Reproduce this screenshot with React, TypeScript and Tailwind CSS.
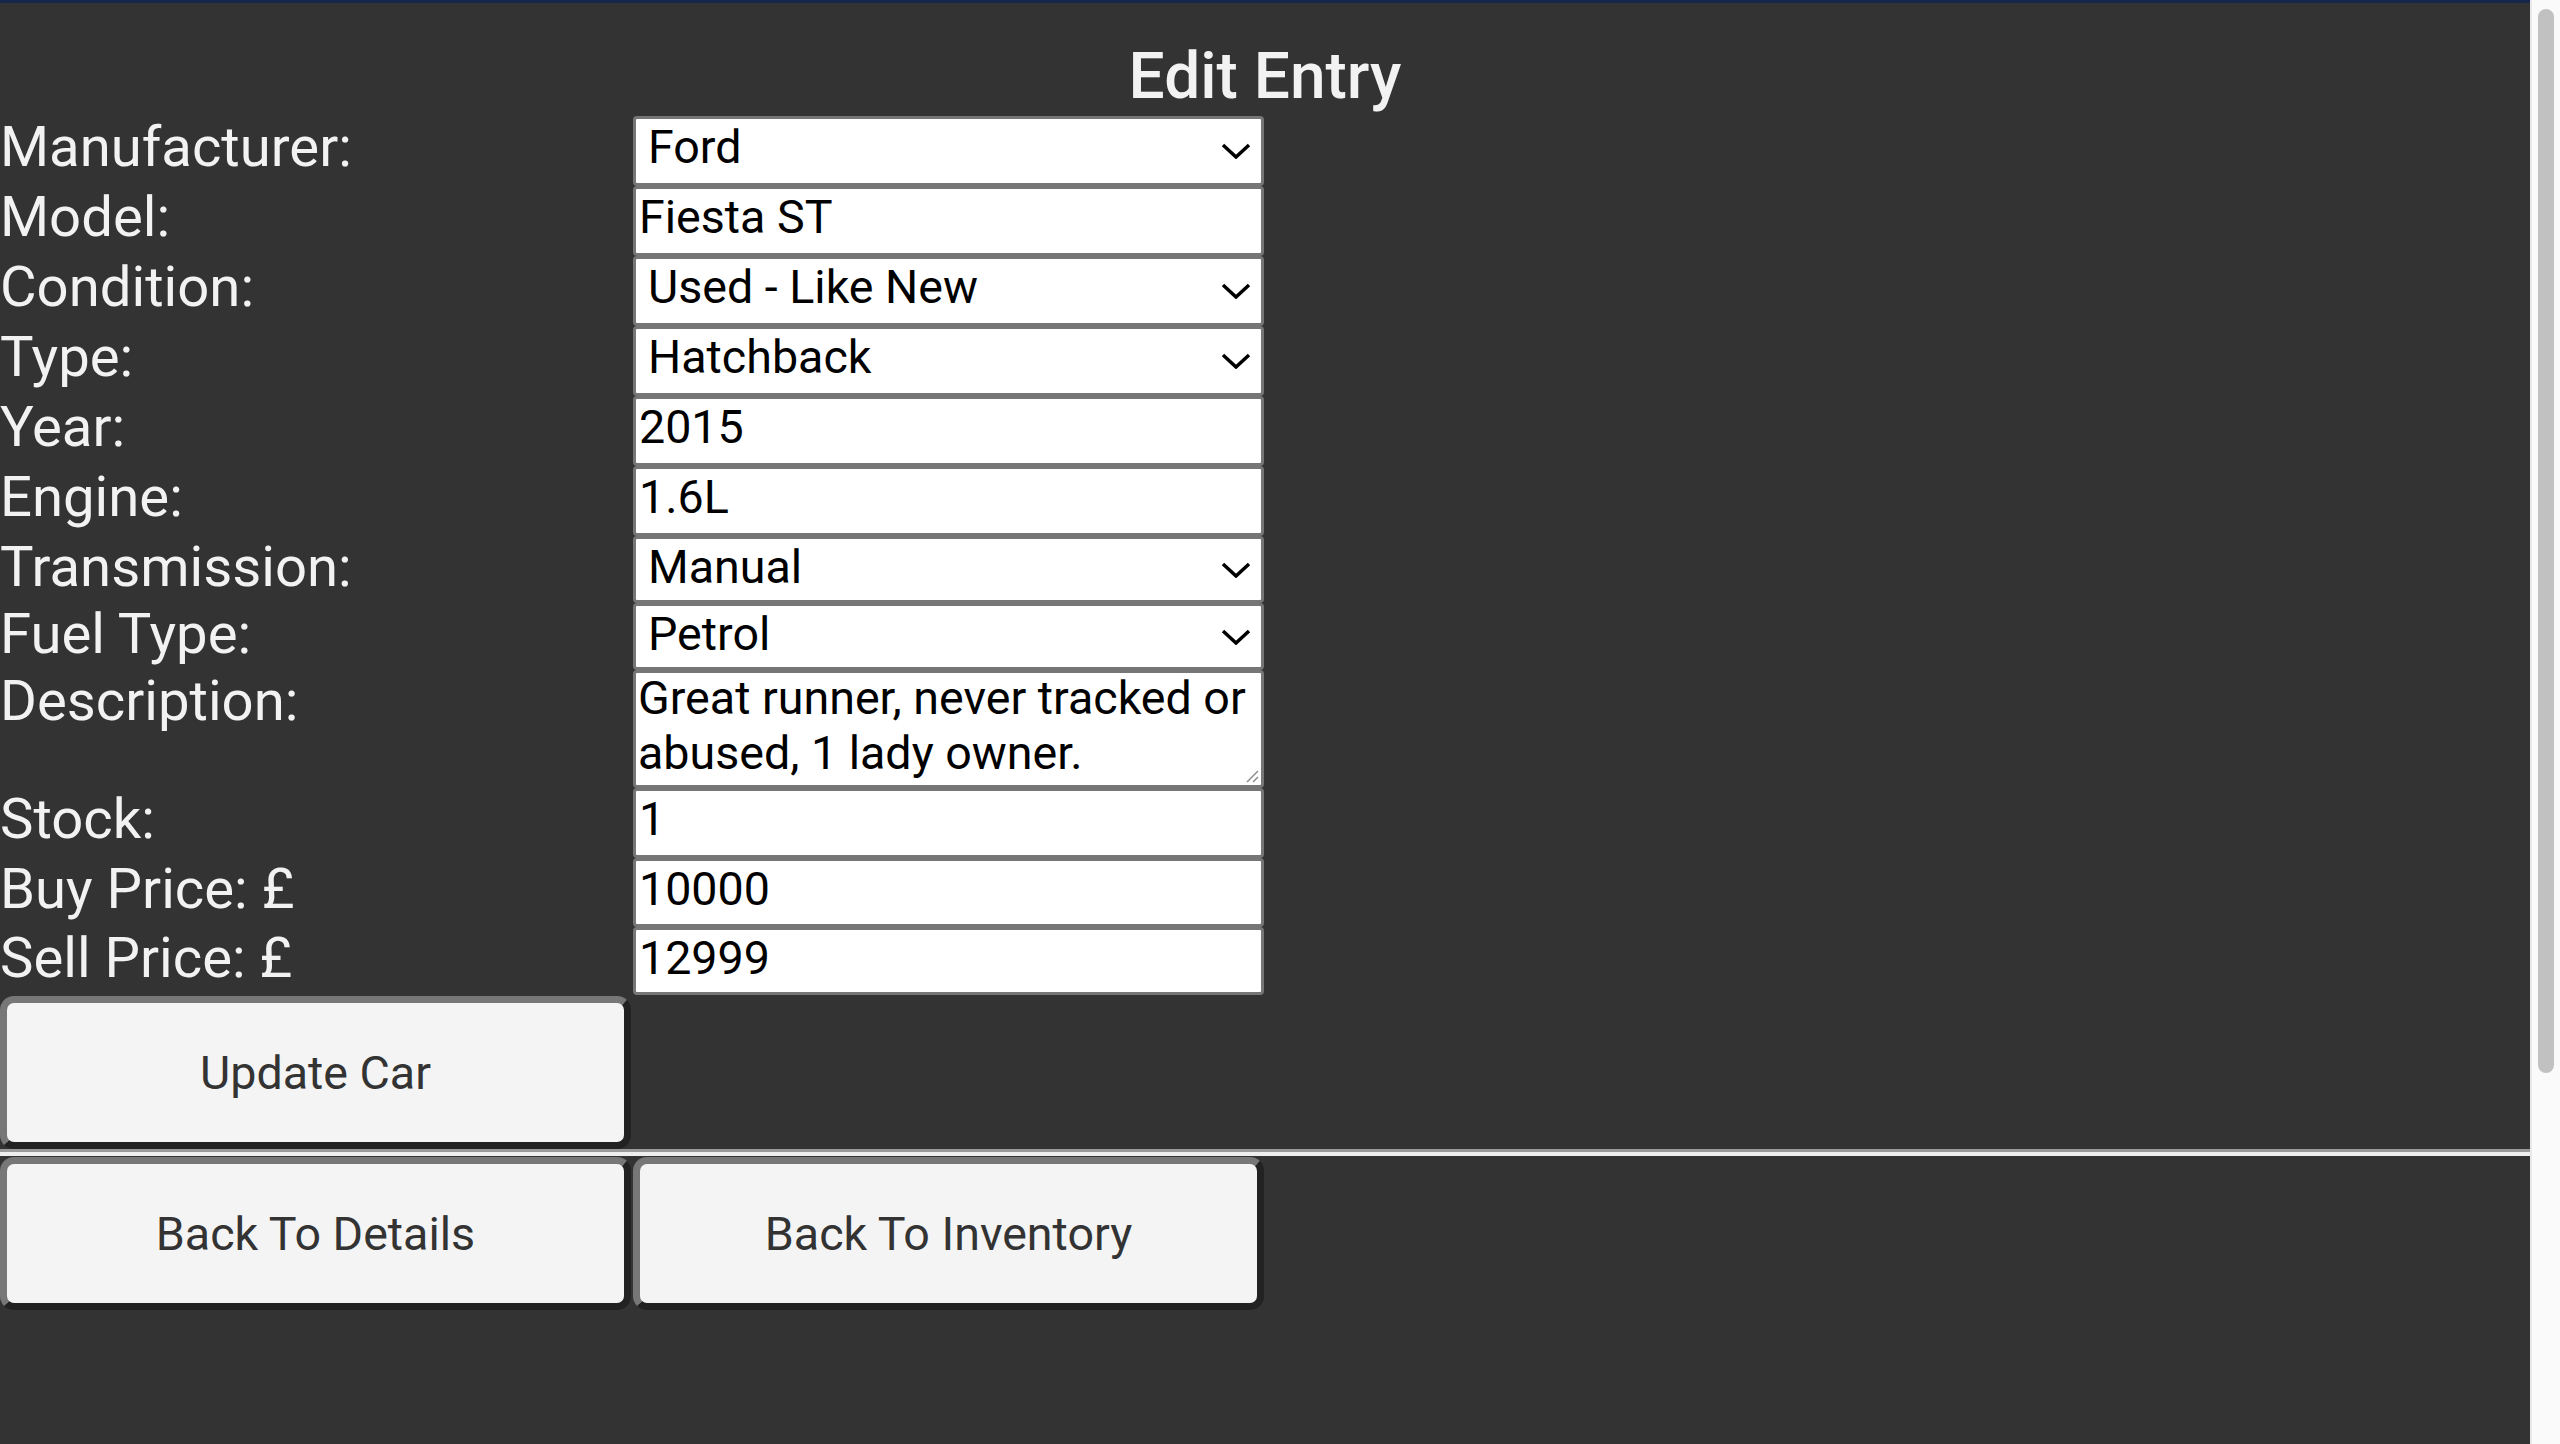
import React from "react";

function Chevron() {
  return (
    <svg width="30" height="16" viewBox="0 0 30 16" className="shrink-0">
      <polyline points="2,2 15,14 28,2" fill="none" stroke="#000" strokeWidth="3.5" />
    </svg>
  );
}

function Label({ children }: { children: React.ReactNode }) {
  return (
    <div className="w-[633px] shrink-0 text-[56.25px] leading-[63px] text-[#f2f2f2] whitespace-nowrap">
      {children}
    </div>
  );
}

function InputRow({ label, value, h }: { label: string; value: string; h: string }) {
  return (
    <div className={"flex items-start " + h}>
      <Label>{label}</Label>
      <div className={"box-border w-[631px] border-[3px] border-[#767676] rounded-[4px] bg-white pl-[3px] pt-[2px] " + h}>
        <div className="text-[46.6px] leading-[53px] text-black whitespace-nowrap">{value}</div>
      </div>
    </div>
  );
}

function SelectRow({ label, value, h }: { label: string; value: string; h: string }) {
  return (
    <div className={"flex items-start " + h}>
      <Label>{label}</Label>
      <div
        className={
          "box-border w-[631px] border-[3px] border-[#767676] rounded-[4px] bg-white pl-[12px] pr-[10px] pt-[2px] flex items-start justify-between " +
          h
        }
      >
        <div className="text-[46.6px] leading-[53px] text-black whitespace-nowrap">{value}</div>
        <div className="self-center -mt-[2px]">
          <Chevron />
        </div>
      </div>
    </div>
  );
}

function Btn({ children }: { children: React.ReactNode }) {
  return (
    <div className="box-border w-[631px] h-[153px] rounded-[14px] border-[7px] border-t-[#777777] border-l-[#777777] border-b-[#222222] border-r-[#222222] bg-[#f4f4f4] flex items-center justify-center text-[46.6px] text-[#333333] leading-[53px] pt-[2px]">
      {children}
    </div>
  );
}

export default function App() {
  return (
    <div className="flex w-full h-[1444px] overflow-hidden font-[Roboto,sans-serif]">
      <div className="flex-1 flex flex-col bg-[#333333]">
        <div className="h-[3px] bg-[#14274a]" />
        <div className="pt-[34px]">
          <div className="h-[79px] text-center text-[64px] font-medium leading-[79px] text-[#f2f2f2]">Edit Entry</div>
        </div>
        <div className="flex flex-col">
          <SelectRow label="Manufacturer:" value="Ford" h="h-[70px]" />
          <InputRow label="Model:" value="Fiesta ST" h="h-[70px]" />
          <SelectRow label="Condition:" value="Used - Like New" h="h-[70px]" />
          <SelectRow label="Type:" value="Hatchback" h="h-[70px]" />
          <InputRow label="Year:" value="2015" h="h-[70px]" />
          <InputRow label="Engine:" value="1.6L" h="h-[70px]" />
          <SelectRow label="Transmission:" value="Manual" h="h-[67px]" />
          <SelectRow label="Fuel Type:" value="Petrol" h="h-[67px]" />
          <div className="flex items-start h-[118px]">
            <Label>Description:</Label>
            <div className="relative box-border w-[631px] h-[118px] border-[3px] border-[#767676] rounded-[4px] bg-white pl-[2px]">
              <div className="-mt-[2px] text-[46.6px] leading-[55px] text-black whitespace-pre-line">
                {"Great runner, never tracked or\nabused, 1 lady owner."}
              </div>
              <svg width="14" height="14" viewBox="0 0 14 14" className="absolute right-[2px] bottom-[2px]">
                <line x1="13" y1="2" x2="2" y2="13" stroke="#8a8a8a" strokeWidth="1.5" />
                <line x1="13" y1="8" x2="8" y2="13" stroke="#8a8a8a" strokeWidth="1.5" />
              </svg>
            </div>
          </div>
          <InputRow label="Stock:" value="1" h="h-[70px]" />
          <InputRow label="Buy Price: £" value="10000" h="h-[69px]" />
          <InputRow label="Sell Price: £" value="12999" h="h-[68px]" />
        </div>
        <div className="mt-[1px]">
          <Btn>Update Car</Btn>
        </div>
        <div className="h-[7px] border-t-[3px] border-b-[4px] border-t-[#9a9a9a] border-b-[#eeeeee] box-border" />
        <div className="flex gap-[2px] mt-[1px]">
          <Btn>Back To Details</Btn>
          <Btn>Back To Inventory</Btn>
        </div>
      </div>
      <div className="w-[30px] shrink-0 bg-[#fafafa] border-l-[2px] border-[#e9e9e9] box-border pl-[6px] pr-[6px] pt-[9px]">
        <div className="w-[16px] h-[1064px] rounded-full bg-[#c1c1c1]" />
      </div>
    </div>
  );
}
